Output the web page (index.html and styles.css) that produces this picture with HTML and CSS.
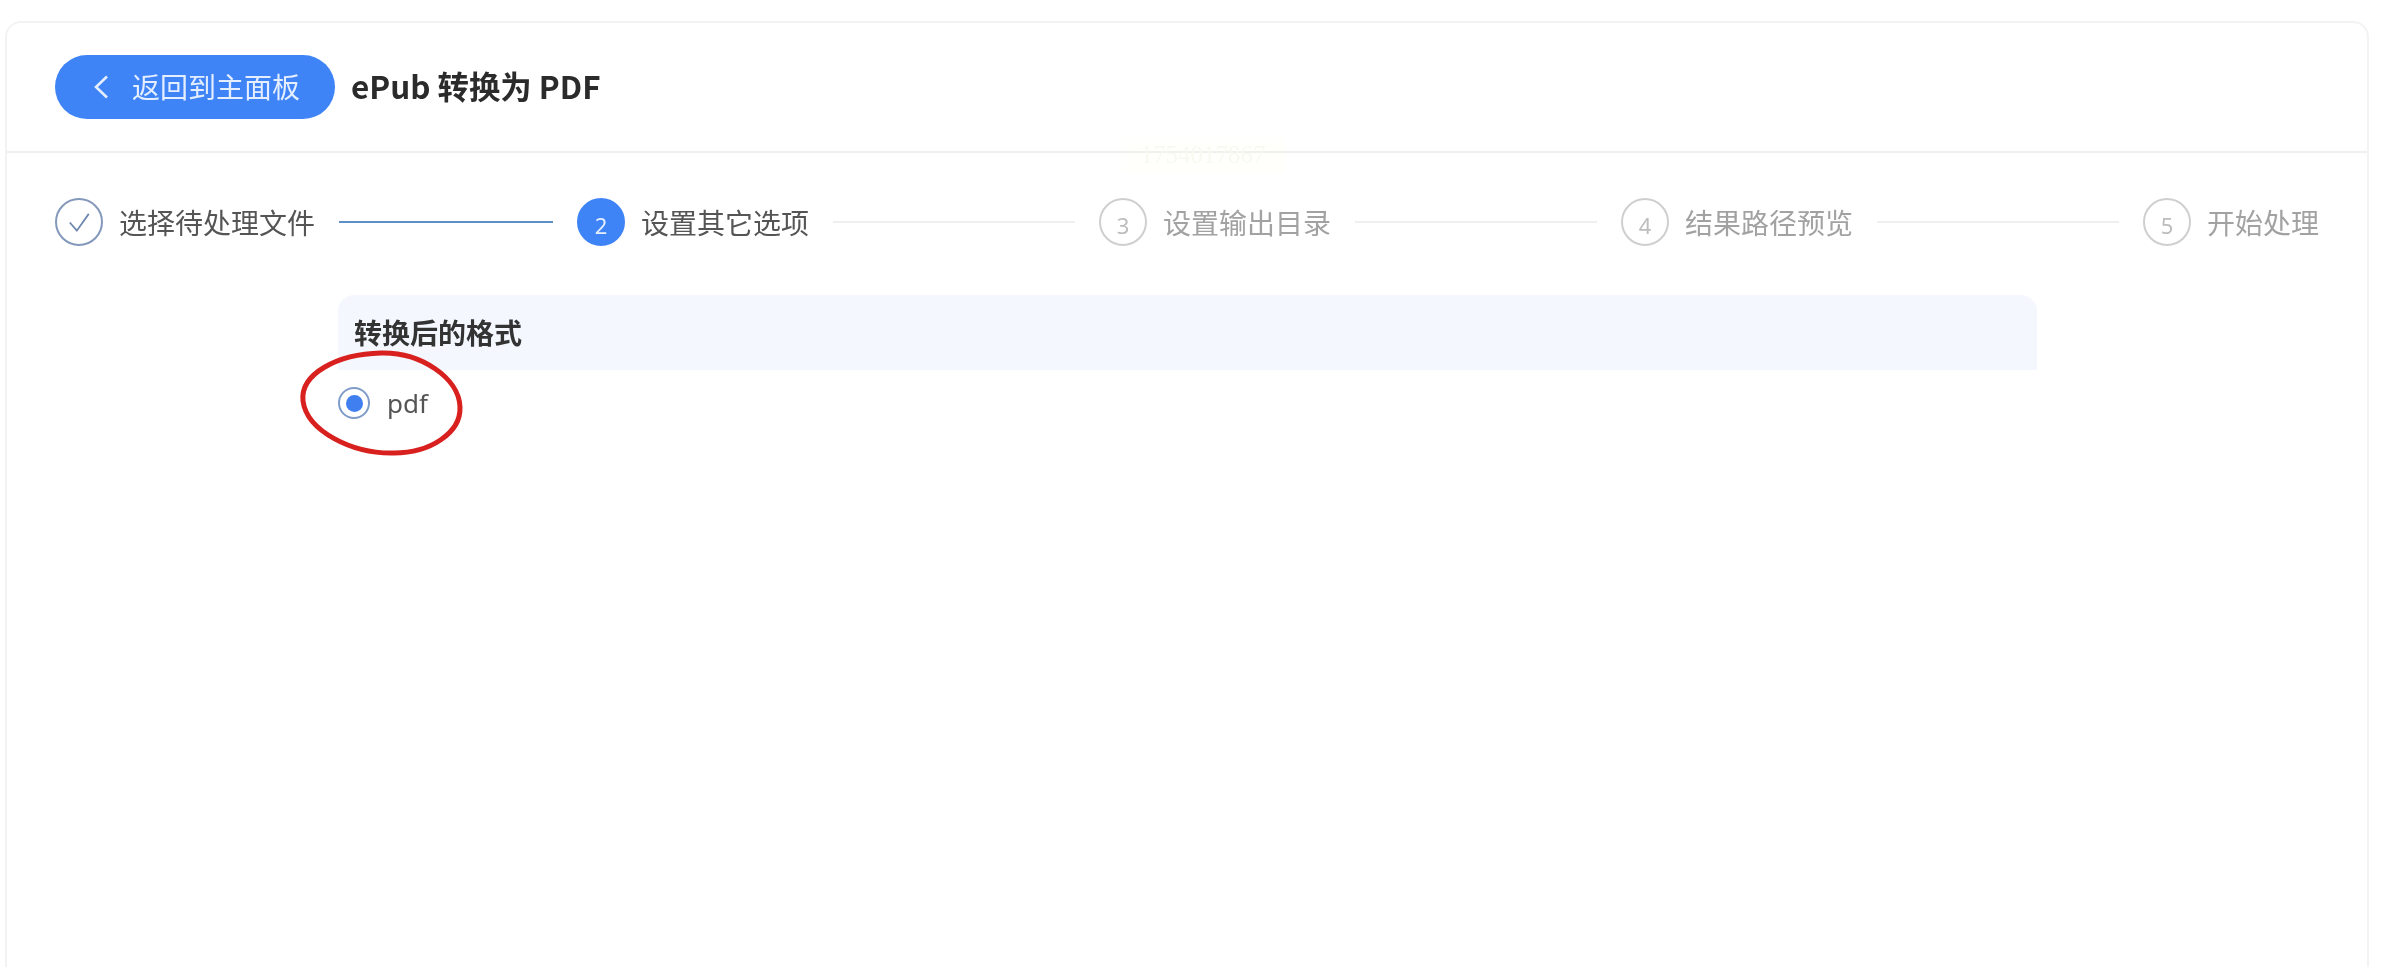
FILE: index.html
```html
<!DOCTYPE html>
<html lang="zh-CN">
<head>
<meta charset="utf-8">
<title>ePub 转换为 PDF</title>
<link rel="stylesheet" href="styles.css">
</head>
<body>
<main class="card">
  <header class="head">
    <button class="back" type="button">
      <svg class="chev" viewBox="0 0 16 24" width="16" height="24"><path d="M14 1.5 3 12l11 10.5" fill="none" stroke="currentColor" stroke-width="2.6"/></svg>
      <span class="back-text">返回到主面板</span>
    </button>
    <h1 class="title">ePub 转换为 PDF</h1>
  </header>
  <ol class="steps">
    <li class="step done">
      <span class="dot"><svg viewBox="0 0 24 24" width="26" height="26"><path d="M3.5 12.5 10 20 21 4.5" fill="none" stroke="currentColor" stroke-width="1.6"/></svg></span>
      <span class="label">选择待处理文件</span>
      <span class="line"></span>
    </li>
    <li class="step active">
      <span class="dot">2</span>
      <span class="label">设置其它选项</span>
      <span class="line"></span>
    </li>
    <li class="step">
      <span class="dot">3</span>
      <span class="label">设置输出目录</span>
      <span class="line"></span>
    </li>
    <li class="step">
      <span class="dot">4</span>
      <span class="label">结果路径预览</span>
      <span class="line"></span>
    </li>
    <li class="step last">
      <span class="dot">5</span>
      <span class="label">开始处理</span>
    </li>
  </ol>
  <section class="form">
    <h2 class="form-title">转换后的格式</h2>
    <label class="radio">
      <span class="radio-mark"><span class="radio-in"></span></span>
      <span class="radio-text">pdf</span>
    </label>
  </section>
</main>
<div class="stamp">1754017867</div>
<svg class="circle-note" viewBox="0 0 170 112" width="170" height="112">
  <path d="M84 6C124 5 162 31 163 60c1 26-30 46-66 46C55 107 10 84 6 54 3 27 40 7 84 6Z" fill="none" stroke="#d8211f" stroke-width="5"/>
</svg>
</body>
</html>
```
FILE: styles.css
```css
* { box-sizing: border-box; }
html, body {
  margin: 0;
  height: 100%;
  overflow: hidden;
  background: #fff;
}
body {
  position: relative;
  padding: 21px 38px 0 5px;
  font-family: "Noto Sans CJK SC", "Noto Sans", sans-serif;
  filter: blur(0.5px);
}
.card {
  height: 100%;
  border: 2px solid #f3f3f3;
  border-bottom: 0;
  border-radius: 16px 16px 0 0;
  background: #fff;
}
.head {
  display: flex;
  align-items: center;
  gap: 16px;
  height: 130px;
  padding: 0 0 0 48px;
  border-bottom: 2px solid #f0f0f0;
}
.back {
  display: flex;
  align-items: center;
  gap: 23px;
  width: 280px;
  height: 64px;
  margin-top: 0;
  padding: 0 0 0 38px;
  border: 0;
  border-radius: 32px;
  background: #3f84f6;
  color: #e4eeff;
  font: 400 28px "Noto Sans CJK SC", sans-serif;
}
.back-text { margin-top: -2px; }
.chev { flex: none; }
.title {
  margin: -3px 0 0;
  color: #2b2b2b;
  font-size: 31.4px;
  font-weight: 700;
  line-height: 40px;
}
.steps {
  display: flex;
  margin: 0;
  padding: 45px 0 0 48px;
  list-style: none;
}
.step {
  display: flex;
  flex: 0 0 522px;
  align-items: center;
  height: 48px;
  color: #a2a2a2;
  font-size: 28px;
}
.step.last { flex: none; }
.dot {
  display: flex;
  flex: none;
  align-items: center;
  justify-content: center;
  width: 48px;
  height: 48px;
  padding-top: 6px;
  border: 2px solid #cfcfcf;
  border-radius: 50%;
  color: #bdbdbd;
  font: 400 22px "Noto Sans", sans-serif;
}
.label { margin-left: 16px; line-height: 40px; white-space: nowrap; }
.line {
  flex: 1;
  height: 2px;
  margin: 0 24px;
  background: #efefef;
}
.done, .active { color: #555; }
.done .dot {
  padding-top: 0;
  border-color: #8498bb;
  color: #6e86ad;
}
.done .line { background: #5b90c9; }
.active .dot {
  border-color: #3f84f6;
  background: #3f84f6;
  color: #e6efff;
}
.form {
  width: 1699px;
  margin: 49px 0 0 331px;
}
.form-title {
  height: 75px;
  margin: 0;
  padding: 0 16px;
  border-radius: 16px 16px 0 0;
  background: #f4f8fe;
  color: #333;
  font-size: 28px;
  font-weight: 700;
  line-height: 75px;
}
.radio {
  display: flex;
  align-items: center;
  height: 66px;
}
.radio-mark {
  display: flex;
  align-items: center;
  justify-content: center;
  width: 32px;
  height: 32px;
  border: 2px solid #7f9cc9;
  border-radius: 50%;
}
.radio-in {
  width: 17px;
  height: 17px;
  border-radius: 50%;
  background: #3f7ff0;
}
.radio-text {
  margin-left: 17px;
  color: #555;
  font: 400 26px "Noto Sans", sans-serif;
}
.stamp {
  position: absolute;
  top: 137px;
  left: 1121px;
  width: 164px;
  height: 36px;
  background: rgba(255, 255, 200, 0.06);
  color: #f9f9f2;
  font: 25px/36px "Liberation Serif", serif;
  text-align: center;
}
.circle-note {
  position: absolute;
  top: 347px;
  left: 297px;
}
```
